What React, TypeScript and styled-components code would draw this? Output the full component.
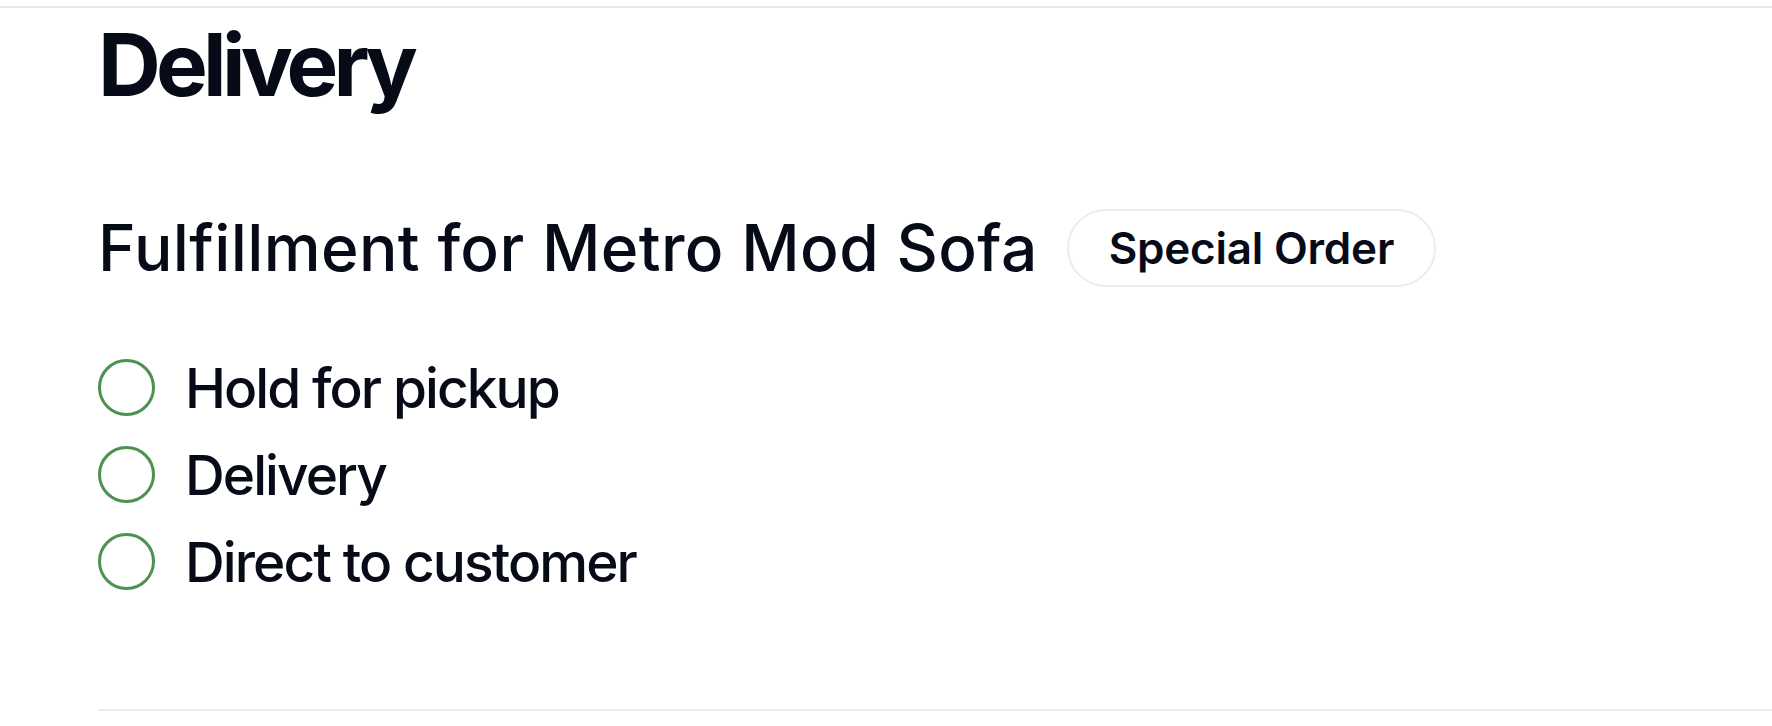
import styled, { createGlobalStyle } from "styled-components";

const GlobalStyle = createGlobalStyle`
  html, body {
    margin: 0;
    padding: 0;
    background: #ffffff;
  }
  body {
    font-family: Inter, "Noto Sans", sans-serif;
    color: #070b18;
  }
`;

const Page = styled.div`
  padding-top: 6px;
`;

const Section = styled.section`
  border-top: 2px solid #e3e8ed;
  padding: 13px 0 0 98px;
`;

const Title = styled.h1`
  margin: 0;
  font-size: 87px;
  line-height: 88px;
  font-weight: 700;
  letter-spacing: -0.055em;
`;

const FulfillmentHeader = styled.div`
  display: flex;
  align-items: center;
  gap: 29px;
  margin-top: 100px;
`;

const Subtitle = styled.h2`
  margin: 0;
  font-size: 64px;
  line-height: 78px;
  font-weight: 500;
  letter-spacing: 0.006em;
`;

const Badge = styled.span`
  display: inline-flex;
  align-items: center;
  height: 78px;
  box-sizing: border-box;
  padding: 0 40px;
  border: 2px solid #ecece8;
  border-radius: 39px;
  font-size: 44px;
  font-weight: 600;
  letter-spacing: -0.005em;
`;

const OptionList = styled.div`
  display: flex;
  flex-direction: column;
  gap: 30px;
  margin-top: 72px;
`;

const Option = styled.label`
  display: flex;
  align-items: center;
  gap: 30px;
  height: 57px;
  font-size: 55px;
  font-weight: 500;
  letter-spacing: -0.035em;
`;

const Radio = styled.span`
  width: 57px;
  height: 57px;
  box-sizing: border-box;
  border: 3px solid #4c9150;
  border-radius: 50%;
  flex-shrink: 0;
`;

const Divider = styled.hr`
  margin: 119px 0 0;
  border: none;
  border-top: 2px solid #ececea;
`;

const options = ["Hold for pickup", "Delivery", "Direct to customer"];

export default function App() {
  return (
    <>
      <GlobalStyle />
      <Page>
        <Section>
          <Title>Delivery</Title>
          <FulfillmentHeader>
            <Subtitle>Fulfillment for Metro Mod Sofa</Subtitle>
            <Badge>Special Order</Badge>
          </FulfillmentHeader>
          <OptionList>
            {options.map(o => (
              <Option key={o}>
                <Radio />
                {o}
              </Option>
            ))}
          </OptionList>
          <Divider />
        </Section>
      </Page>
    </>
  );
}
